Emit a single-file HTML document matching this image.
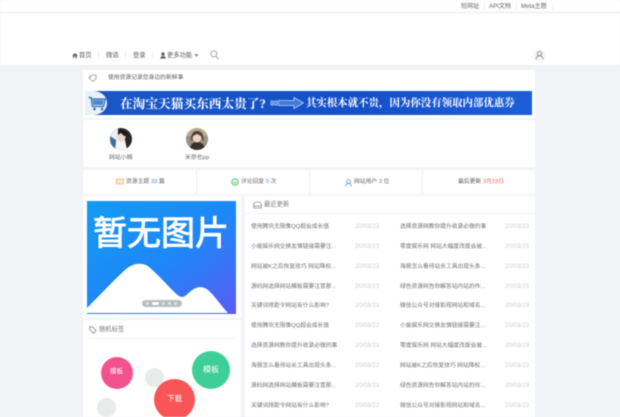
<!DOCTYPE html>
<html lang="zh">
<head>
<meta charset="utf-8">
<title>首页</title>
<style>
html,body{margin:0;padding:0}
body{width:620px;height:417px;overflow:hidden;background:#f2f3f7;position:relative;font-family:"Liberation Sans","Noto Sans CJK SC",sans-serif;color:#555}
#p{position:absolute;left:0;top:0;width:620px;height:417px;overflow:hidden;filter:blur(.5px)}
#p div,#p span.a,#p svg{position:absolute}
.w{background:#fff}
.t{white-space:nowrap;line-height:10px;font-size:6px}
.n{white-space:nowrap;line-height:10px;font-size:6.3px;color:#5c5c5c}
.r{white-space:nowrap;line-height:10px;font-size:5.75px;color:#707070}
.d{white-space:nowrap;line-height:10px;font-size:6.2px;color:#cdcdcd}
.v{width:1px;height:7px;background:#eee}
b{font-weight:normal}
</style>
</head>
<body>
<div id="p">
<div class="w" style="left:0;top:0;width:620px;height:12px"></div>
<div style="left:0;top:12px;width:620px;height:1px;background:#e8e8e8"></div>
<div class="w" style="left:0;top:13px;width:620px;height:52px"></div>

<div class="n" style="left:461px;top:1.500px;color:#666;font-size:6.1px">短网址</div>
<div class="v" style="left:484px;top:3px"></div>
<div class="n" style="left:489px;top:1.500px;color:#666;font-size:6.1px">API文档</div>
<div class="v" style="left:516px;top:3px"></div>
<div class="n" style="left:521px;top:1.500px;color:#666;font-size:6.1px">Meta主题</div>
<div class="v" style="left:552px;top:3px"></div>

<svg style="left:72px;top:53px" width="6" height="5" viewBox="0 0 6 5"><path d="M0 2.600 3 0l3 2.600H5V5H3.600V3.400H2.400V5H1V2.600z" fill="#666"/></svg>
<div class="n" style="left:79px;top:50.500px">首页</div>
<div class="v" style="left:98px;top:51px"></div>
<div class="n" style="left:106px;top:50.500px">微语</div>
<div class="v" style="left:125px;top:51px"></div>
<div class="n" style="left:133px;top:50.500px">登录</div>
<div class="v" style="left:152px;top:51px"></div>
<svg style="left:160px;top:52px" width="6" height="7" viewBox="0 0 6 7"><circle cx="3" cy="2" r="1.700" fill="#666"/><path d="M.3 6.600C.5 4.600 1.600 4 3 4s2.500.6 2.700 2.600z" fill="#666"/></svg>
<div class="n" style="left:167px;top:50.500px">更多功能</div>
<svg style="left:194px;top:54px" width="5" height="3" viewBox="0 0 5 3"><path d="M.5.3h4L2.500 2.700z" fill="#777"/></svg>
<svg style="left:210px;top:50px" width="9" height="10" viewBox="0 0 9 10"><circle cx="3.800" cy="3.900" r="3" fill="none" stroke="#aaa" stroke-width="1"/><path d="M6 6.200 8.400 9" stroke="#aaa" stroke-width="1.100" fill="none"/></svg>
<svg style="left:533px;top:49px" width="13" height="13" viewBox="0 0 13 13"><circle cx="6.500" cy="6.500" r="6.500" fill="#f6f6f6"/><circle cx="6.500" cy="4.600" r="2.100" fill="none" stroke="#777" stroke-width=".8"/><path d="M3 10.200c.3-2.200 1.600-3.300 3.500-3.300s3.200 1.100 3.500 3.300" fill="none" stroke="#777" stroke-width=".8"/></svg>

<!-- main outer -->
<div style="left:83px;top:65px;width:452px;height:5px;background:#f0f1f2"></div>
<div class="w" style="left:83px;top:70px;width:452px;height:19px"></div>
<svg style="left:88px;top:74px" width="9" height="8" viewBox="0 0 9 8"><path d="M1 4.200 4.200 1H8v3.600L5 7.400z" fill="none" stroke="#999" stroke-width=".8"/><path d="M.7 3 3 .8" stroke="#bbb" stroke-width=".6"/></svg>
<div class="t" style="left:108px;top:73px;font-size:5.8px;color:#5c5c5c">使用资源记录您身边的新鲜事</div>

<div class="w" style="left:83px;top:89px;width:452px;height:29px"></div>
<div style="left:85px;top:91px;width:447px;height:24px;background:linear-gradient(90deg,#1b57c7,#1450c8 60%,#1c5ed8)"></div>
<svg style="left:85px;top:91px" width="32" height="24" viewBox="0 0 32 24"><path d="M0 0h9C16 .5 22 5 22 12s-6 11.500-13 12H0z" fill="#e9f0f8"/><path d="M3.500 6.500h2.500l1.500 9h11l2-7.500H6.500" fill="none" stroke="#2f68b8" stroke-width="1.200"/><path d="M7.500 9h11.500l-1.300 5H8.300z" fill="#4f86cc"/><circle cx="9.500" cy="18" r="1.300" fill="#2f68b8"/><circle cx="17" cy="18" r="1.300" fill="#2f68b8"/></svg>
<div class="t" style="left:120px;top:97.500px;line-height:12px;font-size:12.7px;font-weight:bold;color:#fff;font-family:'Liberation Serif','Noto Serif CJK SC',serif">在淘宝天猫买东西太贵了?</div>
<svg style="left:270px;top:96px" width="36" height="14" viewBox="0 0 36 14"><path d="M1 5h2v4H1zM4.500 5H7v4H4.500zM8.500 4.500H24V1.500L33.500 7 24 12.500V9.500H8.500z" fill="#3f79dc" stroke="#b9d0f5" stroke-width=".8"/></svg>
<div class="t" style="left:306px;top:97.500px;line-height:12px;font-size:10.45px;font-weight:bold;color:#fff;font-family:'Liberation Serif','Noto Serif CJK SC',serif">其实根本就不贵&#65292;因为你没有领取内部优惠券</div>

<!-- avatars -->
<div class="w" style="left:83px;top:120px;width:452px;height:47px"></div>
<svg style="left:110px;top:127.500px" width="22" height="22" viewBox="0 0 22 22"><defs><clipPath id="c1"><circle cx="11" cy="11" r="11"/></clipPath><clipPath id="c2"><circle cx="11" cy="11" r="11"/></clipPath></defs><g clip-path="url(#c1)"><rect width="22" height="22" fill="#2b2629"/><rect x="0" y="0" width="8" height="14" fill="#e8eef3"/><path d="M0 8 6 12 6 22H0z" fill="#3f6f9e"/><path d="M6 14c1-3 6-4 9-2l2 10H5z" fill="#f5f5f5"/><ellipse cx="11.500" cy="9" rx="4" ry="5" fill="#f1d6cb"/><path d="M8 3c4-3 9-1 10 4l-4 1-3-3-3 2z" fill="#1f1b1c"/></g></svg>
<svg style="left:185.500px;top:127.500px" width="22" height="22" viewBox="0 0 22 22"><g clip-path="url(#c2)"><rect width="22" height="22" fill="#9a8f80"/><path d="M0 0h22v8H0z" fill="#b7a88f"/><path d="M4 22c0-6 3-8 7-8s8 2 8 8z" fill="#38312e"/><ellipse cx="11" cy="9.500" rx="4.200" ry="5" fill="#ecd3c5"/><path d="M5.500 14C4 7 7 3 11 3s7.500 3 6 11l-2-6-4-2-4 2z" fill="#4e4037"/></g></svg>
<div class="t" style="left:109px;top:153px;font-size:5.9px;color:#666">网站小楠</div>
<div class="t" style="left:185px;top:153px;font-size:5.9px;color:#666">米奈也pp</div>

<!-- stats -->
<div class="w" style="left:83px;top:170px;width:452px;height:24px"></div>
<div style="left:196px;top:170px;width:1px;height:24px;background:#eceef0"></div>
<div style="left:309px;top:170px;width:1px;height:24px;background:#eceef0"></div>
<div style="left:422px;top:170px;width:1px;height:24px;background:#eceef0"></div>
<svg style="left:116px;top:178px" width="8" height="7" viewBox="0 0 8 7"><path d="M.5 1c1.500-.5 2.600-.4 3.500.4C4.900.6 6 .5 7.500 1v5c-1.500-.5-2.600-.4-3.500.4C3.100 5.600 2 5.500.5 6z" fill="#fbe9d2" stroke="#eda75f" stroke-width=".7"/></svg>
<div class="t" style="left:126px;top:177px;color:#666;font-size:5.8px">资源主题 <b style="color:#3d7fe0">33</b> 篇</div>
<svg style="left:231px;top:178px" width="8" height="8" viewBox="0 0 8 8"><circle cx="4" cy="4" r="3.300" fill="#d9f3e0" stroke="#55bd76" stroke-width=".8"/><path d="M2.200 4.300c.8 1 2.800 1 3.600 0" stroke="#55bd76" stroke-width=".6" fill="none"/></svg>
<div class="t" style="left:241px;top:177px;color:#666;font-size:5.8px">评论回复 <b style="color:#3d7fe0">0</b> 次</div>
<svg style="left:345px;top:179px" width="7" height="8" viewBox="0 0 7 8"><circle cx="3.500" cy="2.500" r="1.900" fill="none" stroke="#4f9be8" stroke-width=".8"/><path d="M.6 7.500c.2-2 1.300-3 2.900-3s2.700 1 2.900 3" fill="none" stroke="#4f9be8" stroke-width=".8"/></svg>
<div class="t" style="left:354px;top:177px;color:#666;font-size:5.8px">网站用户 <b style="color:#3d7fe0">3</b> 位</div>
<div class="t" style="left:458px;top:177px;color:#555;font-size:5.8px">最后更新 <b style="color:#f4605f">3月23日</b></div>

<!-- left image card -->
<div class="w" style="left:83px;top:196px;width:158px;height:122px"></div>
<svg style="left:87px;top:201px" width="149" height="113" viewBox="0 0 149 113"><defs><linearGradient id="bg" x1="0" y1="0" x2="1" y2="1"><stop offset="0" stop-color="#139bf3"/><stop offset=".55" stop-color="#1f86f7"/><stop offset="1" stop-color="#5a5cf4"/></linearGradient></defs><rect width="149" height="113" fill="url(#bg)"/><path d="M0 107 C15 92 28 78 38 69 C44 63 55 60 62 66 C72 74 85 90 92 95 C97 98 100 93 104 90 C110 85 116 85 121 89 C128 95 135 106 141 112 H0z" fill="#fff"/></svg>
<div class="t" style="left:93px;top:212px;width:140px;line-height:44px;font-size:34px;color:#fff;-webkit-text-stroke:.9px #fff;font-family:'Liberation Sans','Noto Sans CJK SC',sans-serif">暂无图片</div>
<div style="left:142px;top:300px;width:40px;height:7px;border-radius:4px;background:#b9bcc0"></div>
<div style="left:152px;top:302px;width:7px;height:3px;border-radius:2px;background:#fff"></div>
<div style="left:146px;top:302px;width:3px;height:3px;border-radius:2px;background:#dfe1e3"></div>
<div style="left:162px;top:302px;width:3px;height:3px;border-radius:2px;background:#dfe1e3"></div>
<div style="left:168px;top:302px;width:3px;height:3px;border-radius:2px;background:#dfe1e3"></div>
<div style="left:174px;top:302px;width:3px;height:3px;border-radius:2px;background:#dfe1e3"></div>

<!-- tags card -->
<div class="w" style="left:83px;top:320px;width:158px;height:97px"></div>
<svg style="left:89px;top:326px" width="8" height="8" viewBox="0 0 8 8"><path d="M.7 3.500V.8h2.700l3.800 3.800-2.700 2.700z" fill="none" stroke="#888" stroke-width=".8"/></svg>
<div class="t" style="left:99px;top:325px;font-size:6.3px;color:#777">随机标签</div>
<div style="left:89px;top:338px;width:146px;height:1px;background:#f3f3f3"></div>
<div style="left:101px;top:357px;width:32px;height:32px;border-radius:50%;background:#f4528f"></div>
<div style="left:145px;top:368px;width:19px;height:19px;border-radius:50%;background:#e9ebea"></div>
<div style="left:192px;top:351px;width:38px;height:38px;border-radius:50%;background:#3ecf97"></div>
<div style="left:154px;top:379px;width:41px;height:41px;border-radius:50%;background:#f95557"></div>
<div style="left:97px;top:398px;width:19px;height:19px;border-radius:50%;background:#e9ebea"></div>
<div class="t" style="left:110px;top:367px;font-size:6.5px;color:#fff">模板</div>
<div class="t" style="left:203px;top:365px;font-size:8px;color:#fff">模板</div>
<div class="t" style="left:167px;top:394px;font-size:7.5px;color:#fff">下载</div>

<!-- list card -->
<div class="w" style="left:245px;top:196px;width:290px;height:221px"></div>
<svg style="left:253px;top:201px" width="9" height="8" viewBox="0 0 9 8"><path d="M.7 7V3.600C.7 2 2 1 4.500 1s3.800 1 3.800 2.600V7zM.7 5h7.600" fill="none" stroke="#888" stroke-width=".8"/></svg>
<div class="t" style="left:264px;top:200px;font-size:6.3px;color:#777">最近更新</div>
<div style="left:245px;top:213px;width:290px;height:1px;background:#f4f4f4"></div>

<div class="r" style="left:251px;top:222px">使用腾讯无限像QQ超会成长值</div><div class="d" style="left:355px;top:222px">20/03/23</div>
<div class="r" style="left:400px;top:222px">选择资源网教你提升收录必做的事</div><div class="d" style="left:505px;top:222px">20/03/23</div>
<div class="r" style="left:251px;top:242px">小偷娱乐网交换友情链接需要注...</div><div class="d" style="left:355px;top:242px">20/03/23</div>
<div class="r" style="left:400px;top:242px">零度娱乐网 网站大幅度改版会被...</div><div class="d" style="left:505px;top:242px">20/03/23</div>
<div class="r" style="left:251px;top:262px">网站被K之后恢复技巧 网站降权...</div><div class="d" style="left:355px;top:262px">20/03/23</div>
<div class="r" style="left:400px;top:262px">海报怎么看待站长工具出现头条...</div><div class="d" style="left:505px;top:262px">20/03/23</div>
<div class="r" style="left:251px;top:282px">源码网选择网站模板需要注意那...</div><div class="d" style="left:355px;top:282px">20/03/23</div>
<div class="r" style="left:400px;top:282px">绿色资源网告你解答站内站的作...</div><div class="d" style="left:505px;top:282px">20/03/23</div>
<div class="r" style="left:251px;top:301px">关键词排距令网站有什么影响?</div><div class="d" style="left:355px;top:301px">20/03/23</div>
<div class="r" style="left:400px;top:301px">微信公众号对接影视网站和域名...</div><div class="d" style="left:505px;top:301px">20/03/23</div>
<div class="r" style="left:251px;top:321px">使用腾讯无限像QQ超会成长值</div><div class="d" style="left:355px;top:321px">20/03/23</div>
<div class="r" style="left:400px;top:321px">小偷娱乐网交换友情链接需要注...</div><div class="d" style="left:505px;top:321px">20/03/23</div>
<div class="r" style="left:251px;top:341px">选择资源网教你提升收录必做的事</div><div class="d" style="left:355px;top:341px">20/03/23</div>
<div class="r" style="left:400px;top:341px">零度娱乐网 网站大幅度改版会被...</div><div class="d" style="left:505px;top:341px">20/03/23</div>
<div class="r" style="left:251px;top:361px">海报怎么看待站长工具出现头条...</div><div class="d" style="left:355px;top:361px">20/03/23</div>
<div class="r" style="left:400px;top:361px">网站被K之后恢复技巧 网站降权...</div><div class="d" style="left:505px;top:361px">20/03/23</div>
<div class="r" style="left:251px;top:381px">源码网选择网站模板需要注意那...</div><div class="d" style="left:355px;top:381px">20/03/23</div>
<div class="r" style="left:400px;top:381px">绿色资源网告你解答站内站的作...</div><div class="d" style="left:505px;top:381px">20/03/23</div>
<div class="r" style="left:251px;top:401px">关键词排距令网站有什么影响?</div><div class="d" style="left:355px;top:401px">20/03/23</div>
<div class="r" style="left:400px;top:401px">微信公众号对接影视网站和域名...</div><div class="d" style="left:505px;top:401px">20/03/23</div>
</div>
</body>
</html>
